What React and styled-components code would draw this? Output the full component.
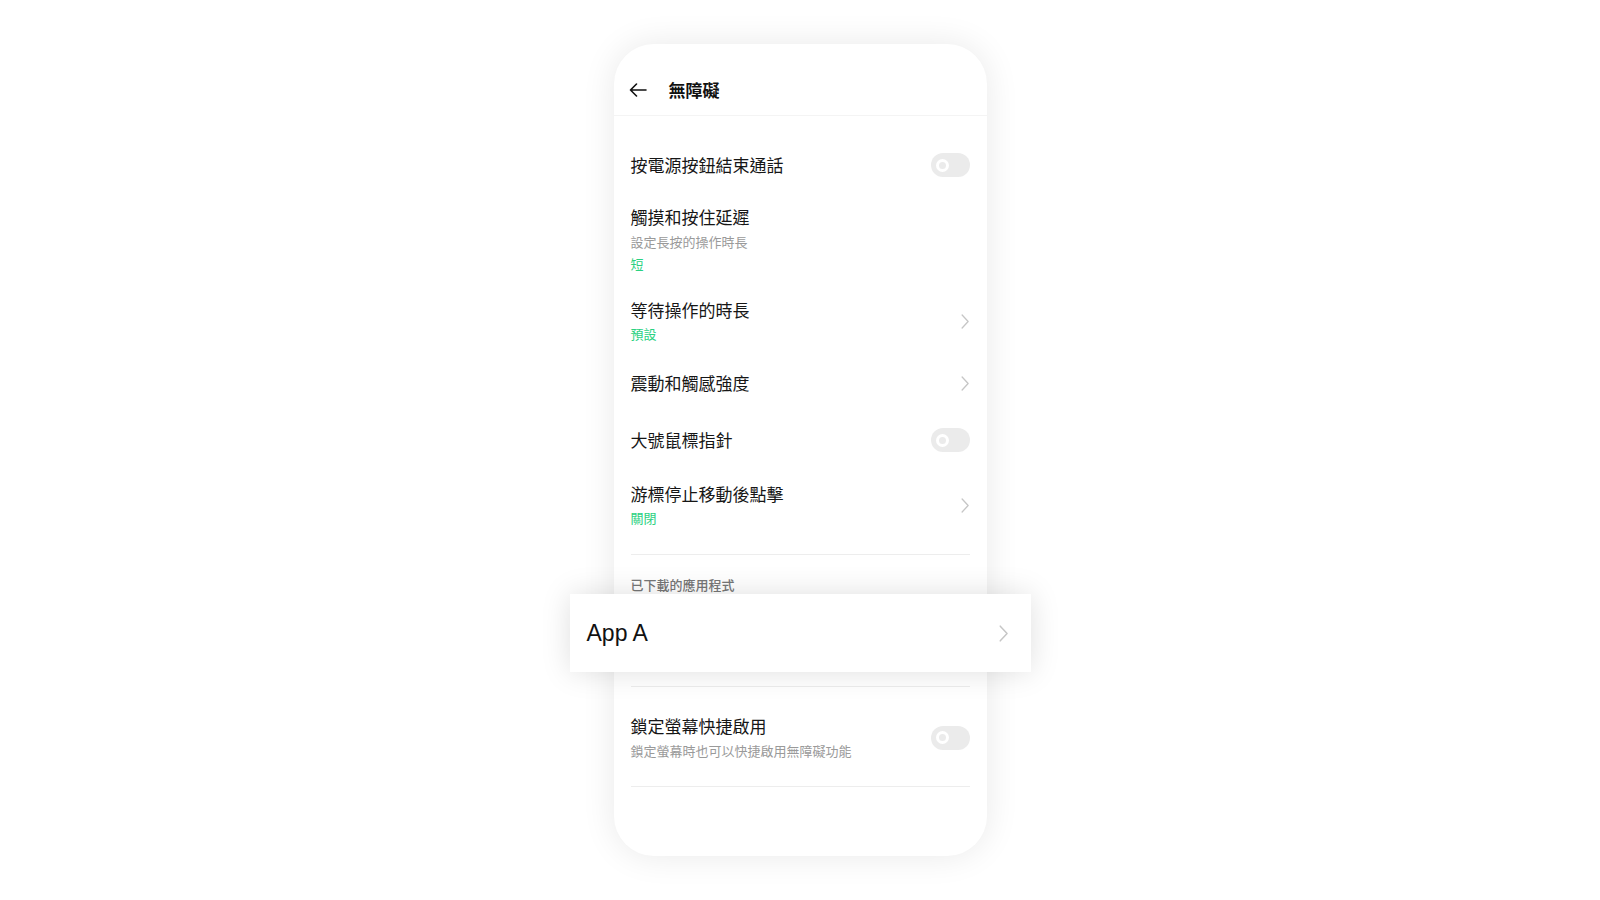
import styled, { createGlobalStyle } from 'styled-components';

const GlobalStyle = createGlobalStyle`
    html, body {
        margin: 0;
        padding: 0;
        background: #ffffff;
    }
    body {
        font-family: "Noto Sans CJK TC", "Noto Sans", sans-serif;
        color: #1a1a1a;
    }
`;

const Stage = styled.div`
    width: 1600px;
    height: 900px;
    display: flex;
    align-items: center;
    justify-content: center;
`;

const Phone = styled.div`
    width: 373px;
    height: 812px;
    background: #ffffff;
    border-radius: 40px;
    box-shadow: 0 0 34px rgba(0, 0, 0, 0.09);
    display: flex;
    flex-direction: column;
`;

const Header = styled.div`
    height: 72px;
    display: flex;
    align-items: center;
    gap: 22px;
    padding: 20px 17px 0 15px;
    border-bottom: 1px solid #f4f4f4;
    box-sizing: border-box;
`;

const HeaderTitle = styled.div`
    font-size: 17px;
    font-weight: 700;
    color: #111;
`;

const List = styled.div`
    display: flex;
    flex-direction: column;
    padding-top: 23px;
`;

const Row = styled.div`
    display: flex;
    align-items: center;
    justify-content: space-between;
    padding: ${(p) => p.$pad || '14px 17px'};
    padding-left: 17px;
    padding-right: 17px;
`;

const Texts = styled.div`
    display: flex;
    flex-direction: column;
`;

const Title = styled.div`
    font-size: 17px;
    line-height: 24px;
    font-weight: 400;
    color: #161616;
`;

const Sub = styled.div`
    font-size: 13px;
    line-height: 20px;
    margin-top: ${(p) => (p.$value ? '2px' : '3px')};
    color: ${(p) => (p.$value ? '#2ad181' : '#9a9a9a')};
`;

const Toggle = styled.div`
    width: 39px;
    height: 24px;
    border-radius: 12px;
    background: #ebebeb;
    display: flex;
    align-items: center;
    padding-left: 5px;
    box-sizing: border-box;
    flex-shrink: 0;
`;

const Knob = styled.div`
    width: 13px;
    height: 13px;
    border-radius: 50%;
    border: 3px solid #ffffff;
    box-sizing: border-box;
`;

const Divider = styled.div`
    height: 1px;
    background: #ededed;
    margin: ${(p) => p.$margin || '0'} 17px 0;
`;

const SectionLabel = styled.div`
    font-size: 13px;
    line-height: 18px;
    font-weight: 500;
    color: #777;
    padding: 21px 17px 0;
`;

const AppCard = styled.div`
    height: 78px;
    margin: 0 -44px;
    background: #ffffff;
    box-shadow: 0 0 30px rgba(0, 0, 0, 0.13);
    display: flex;
    align-items: center;
    justify-content: space-between;
    padding: 0 22px 0 17px;
    position: relative;
`;

const AppName = styled.div`
    font-family: "Liberation Sans", Arial, sans-serif;
    font-size: 23px;
    color: #111;
`;

const Chevron = ({ size = 15 }) => (
    <svg width={size * 0.55} height={size} viewBox="0 0 8 15" fill="none">
        <polyline points="1,1 7,7.5 1,14" stroke="#c6c6c6" strokeWidth="1.3" strokeLinecap="round" strokeLinejoin="round" />
    </svg>
);

const BackArrow = () => (
    <svg width="18" height="14" viewBox="0 0 18 14" fill="none">
        <path d="M17 7H1.5M7.5 1L1.5 7l6 6" stroke="#111" strokeWidth="1.6" strokeLinecap="round" strokeLinejoin="round" />
    </svg>
);

const Switch = () => (
    <Toggle>
        <Knob />
    </Toggle>
);

const rows = [
    { title: '按電源按鈕結束通話', end: 'switch' },
    { title: '觸摸和按住延遲', sub: '設定長按的操作時長', value: '短', pad: '14px 0 10px' },
    { title: '等待操作的時長', value: '預設', end: 'chevron' },
    { title: '震動和觸感強度', end: 'chevron', pad: '13px 0 17px' },
    { title: '大號鼠標指針', end: 'switch', pad: '16px 0' },
    { title: '游標停止移動後點擊', value: '關閉', end: 'chevron' },
];

const App = () => (
    <>
        <GlobalStyle />
        <Stage>
            <Phone>
                <Header>
                    <BackArrow />
                    <HeaderTitle>無障礙</HeaderTitle>
                </Header>
                <List>
                    {rows.map((r, i) => (
                        <Row key={i} $pad={r.pad}>
                            <Texts>
                                <Title>{r.title}</Title>
                                {r.sub && <Sub>{r.sub}</Sub>}
                                {r.value && <Sub $value>{r.value}</Sub>}
                            </Texts>
                            {r.end === 'switch' && <Switch />}
                            {r.end === 'chevron' && <Chevron />}
                        </Row>
                    ))}
                    <Divider $margin="12px" />
                    <SectionLabel>已下載的應用程式</SectionLabel>
                    <AppCard>
                        <AppName>App A</AppName>
                        <Chevron size={17} />
                    </AppCard>
                    <Divider $margin="14px" />
                    <Row $pad="27px 0 28px">
                        <Texts>
                            <Title>鎖定螢幕快捷啟用</Title>
                            <Sub>鎖定螢幕時也可以快捷啟用無障礙功能</Sub>
                        </Texts>
                        <Switch />
                    </Row>
                    <Divider $margin="-3px" />
                </List>
            </Phone>
        </Stage>
    </>
);

export default App;
